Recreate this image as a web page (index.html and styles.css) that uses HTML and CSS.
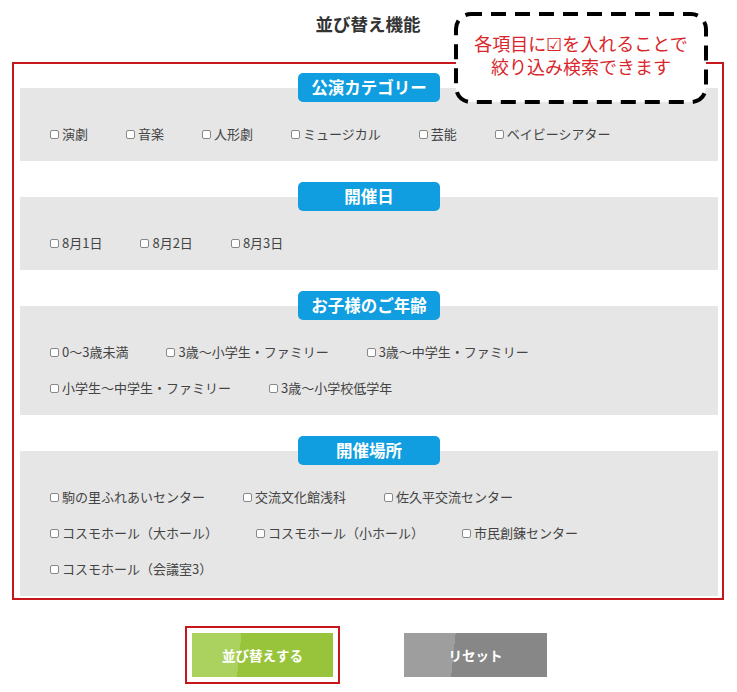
FILE: index.html
```html
<!DOCTYPE html>
<html lang="ja">
<head>
    <meta charset="UTF-8">
    <meta name="viewport" content="width=device-width, initial-scale=1.0">
    <title>並び替え機能</title>
    <link rel="stylesheet" href="styles.css">
</head>
<body>
    <div class="page">
        <h1 class="title">並び替え機能</h1>

        <div class="callout">
            <svg class="callout-border" width="254" height="92" viewBox="0 0 254 92">
                <rect x="2" y="2" width="250" height="88" rx="15" ry="15" fill="#fff" stroke="#000" stroke-width="4" stroke-dasharray="15 9" stroke-dashoffset="4"></rect>
            </svg>
            <p class="callout-text">各項目に☑を入れることで<br>絞り込み検索できます</p>
        </div>

        <div class="filter-frame">
            <div class="section">
                <div class="pill">公演カテゴリー</div>
                <div class="panel">
                    <label class="item"><input type="checkbox">演劇</label>
                    <label class="item"><input type="checkbox">音楽</label>
                    <label class="item"><input type="checkbox">人形劇</label>
                    <label class="item"><input type="checkbox">ミュージカル</label>
                    <label class="item"><input type="checkbox">芸能</label>
                    <label class="item"><input type="checkbox">ベイビーシアター</label>
                </div>
            </div>

            <div class="section">
                <div class="pill">開催日</div>
                <div class="panel">
                    <label class="item"><input type="checkbox">8月1日</label>
                    <label class="item"><input type="checkbox">8月2日</label>
                    <label class="item"><input type="checkbox">8月3日</label>
                </div>
            </div>

            <div class="section">
                <div class="pill">お子様のご年齢</div>
                <div class="panel">
                    <label class="item"><input type="checkbox">0〜3歳未満</label>
                    <label class="item"><input type="checkbox">3歳〜小学生・ファミリー</label>
                    <label class="item"><input type="checkbox">3歳〜中学生・ファミリー</label>
                    <label class="item"><input type="checkbox">小学生〜中学生・ファミリー</label>
                    <label class="item"><input type="checkbox">3歳〜小学校低学年</label>
                </div>
            </div>

            <div class="section">
                <div class="pill">開催場所</div>
                <div class="panel">
                    <label class="item"><input type="checkbox">駒の里ふれあいセンター</label>
                    <label class="item"><input type="checkbox">交流文化館浅科</label>
                    <label class="item"><input type="checkbox">佐久平交流センター</label>
                    <label class="item"><input type="checkbox">コスモホール（大ホール）</label>
                    <label class="item"><input type="checkbox">コスモホール（小ホール）</label>
                    <label class="item"><input type="checkbox">市民創錬センター</label>
                    <label class="item"><input type="checkbox">コスモホール（会議室3）</label>
                </div>
            </div>
        </div>

        <div class="actions">
            <div class="highlight">
                <button class="btn btn-sort">並び替えする</button>
            </div>
            <button class="btn btn-reset">リセット</button>
        </div>
    </div>
</body>
</html>
```

FILE: styles.css
```css
body {
    margin: 0;
    font-family: "Noto Sans CJK JP", "Noto Sans", sans-serif;
    background-color: #fff;
    color: #444;
}
.page {
    position: relative;
    width: 737px;
    padding: 12px 13px 0 12px;
    box-sizing: border-box;
}
.title {
    margin: 0;
    height: 24px;
    line-height: 24px;
    font-size: 17.5px;
    font-weight: bold;
    color: #333;
    text-align: center;
}
.callout {
    position: absolute;
    top: 12px;
    left: 454px;
    width: 254px;
    height: 92px;
    z-index: 2;
}
.callout-border {
    position: absolute;
    top: 0;
    left: 0;
}
.callout-text {
    position: relative;
    margin: 0;
    padding-top: 20px;
    font-size: 18px;
    line-height: 23px;
    color: #d9262b;
    text-align: center;
}
.filter-frame {
    margin-top: 26px;
    border: 2px solid #c8161d;
    padding: 9px 4px 2px 6px;
}
.section + .section {
    margin-top: 21px;
}
.pill {
    position: relative;
    z-index: 1;
    width: 142px;
    height: 29px;
    margin: 0 auto -14px;
    border-radius: 5px;
    background-color: #109ee0;
    color: #fff;
    font-size: 16.5px;
    font-weight: bold;
    line-height: 29px;
    text-align: center;
}
.panel {
    display: flex;
    flex-wrap: wrap;
    column-gap: 38px;
    row-gap: 16px;
    padding: 35px 20px 18px 30px;
    background-color: #e6e6e6;
}
.item {
    display: inline-flex;
    align-items: center;
    height: 20px;
    font-size: 13px;
    color: #444;
    white-space: nowrap;
}
.item input {
    appearance: none;
    -webkit-appearance: none;
    width: 9px;
    height: 9px;
    margin: 2px 3px 0 0;
    border: 1px solid #888;
    border-radius: 2px;
    background-color: #fff;
    box-sizing: border-box;
}
.actions {
    display: flex;
    justify-content: center;
    align-items: center;
    gap: 64px;
    margin-top: 26px;
    padding-right: 4px;
}
.highlight {
    border: 2px solid #c8161d;
    padding: 5px;
}
.btn {
    display: block;
    height: 44px;
    border: none;
    color: #fff;
    font-family: inherit;
    font-size: 13.5px;
    font-weight: bold;
    cursor: pointer;
}
.btn-sort {
    width: 141px;
    background: linear-gradient(96deg, #abd15e 34%, #98c43b 34%);
}
.btn-reset {
    width: 143px;
    background: linear-gradient(96deg, #9e9e9e 35%, #878787 35%);
}
```
